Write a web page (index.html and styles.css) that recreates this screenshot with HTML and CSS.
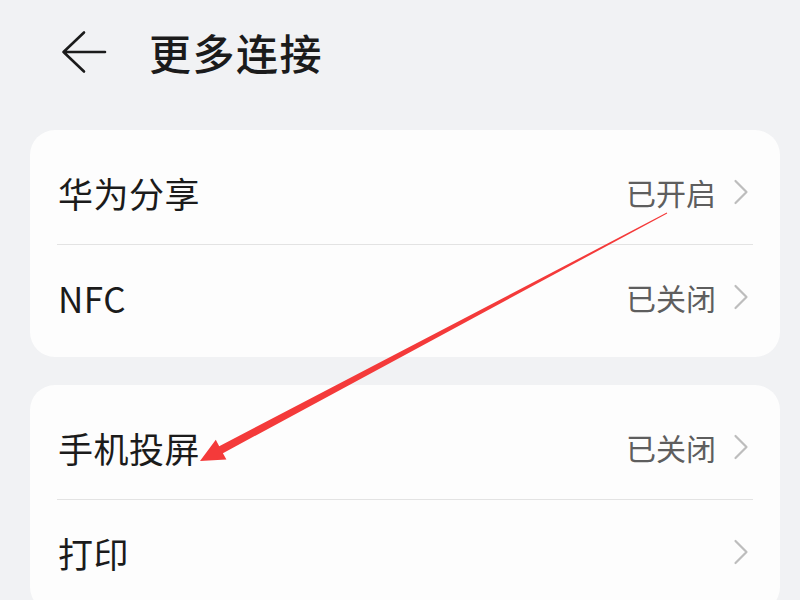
FILE: index.html
```html
<!DOCTYPE html>
<html lang="zh-CN">
<head>
<meta charset="utf-8">
<link rel="stylesheet" href="styles.css">
</head>
<body>
<div class="page">
  <header class="topbar">
    <svg class="back" width="50" height="48" viewBox="58 28 50 48" aria-hidden="true">
      <path d="M63.5 52 H105 M84 32.5 L63.5 52 L84 71.5" fill="none" stroke="#1b1b1b" stroke-width="2.6" stroke-linecap="round" stroke-linejoin="round"/>
    </svg>
    <h1 class="title">更多连接</h1>
  </header>

  <section class="card">
    <div class="row">
      <span class="label">华为分享</span>
      <span class="value">已开启</span>
      <svg class="chev" width="16" height="26" viewBox="0 0 16 26"><path d="M2.5 2 L13.5 13 L2.5 24" fill="none" stroke="#bdbdbd" stroke-width="2.2" stroke-linecap="round" stroke-linejoin="round"/></svg>
    </div>
    <div class="divider"></div>
    <div class="row">
      <span class="label">NFC</span>
      <span class="value">已关闭</span>
      <svg class="chev" width="16" height="26" viewBox="0 0 16 26"><path d="M2.5 2 L13.5 13 L2.5 24" fill="none" stroke="#bdbdbd" stroke-width="2.2" stroke-linecap="round" stroke-linejoin="round"/></svg>
    </div>
  </section>

  <section class="card">
    <div class="row">
      <span class="label">手机投屏</span>
      <span class="value">已关闭</span>
      <svg class="chev" width="16" height="26" viewBox="0 0 16 26"><path d="M2.5 2 L13.5 13 L2.5 24" fill="none" stroke="#bdbdbd" stroke-width="2.2" stroke-linecap="round" stroke-linejoin="round"/></svg>
    </div>
    <div class="divider"></div>
    <div class="row">
      <span class="label">打印</span>
      <span class="value"></span>
      <svg class="chev" width="16" height="26" viewBox="0 0 16 26"><path d="M2.5 2 L13.5 13 L2.5 24" fill="none" stroke="#bdbdbd" stroke-width="2.2" stroke-linecap="round" stroke-linejoin="round"/></svg>
    </div>
  </section>

  <svg class="annot" width="800" height="600" viewBox="0 0 800 600" aria-hidden="true">
    <polygon points="667.2,213.4 222.9,453.2 226.4,459.6 200,461 215.8,439.8 219.2,446.2 666.8,212.6" fill="#f43a3a"/>
  </svg>
</div>
</body>
</html>
```

FILE: styles.css
```css
html, body {
  margin: 0;
  padding: 0;
}
body {
  background: #f1f2f4;
  font-family: "Noto Sans CJK SC", "Noto Sans", sans-serif;
  color: #1b1b1b;
  width: 800px;
  height: 600px;
  overflow: hidden;
}
.page {
  position: relative;
  padding: 0 20px 0 30px;
}
.topbar {
  display: flex;
  align-items: center;
  height: 104px;
  margin-bottom: 26px;
}
.back {
  margin-left: 28px;
  flex: none;
}
.title {
  margin: 0 0 0 41px;
  font-size: 42px;
  font-weight: 500;
  line-height: 1;
  letter-spacing: 1.5px;
}
.card {
  background: #fdfdfd;
  border-radius: 25px;
  padding: 10px 27px 8px;
  margin-bottom: 28px;
}
.row {
  display: flex;
  align-items: center;
  height: 104px;
}
.label {
  flex: 1;
  font-size: 35px;
  font-weight: 400;
  line-height: 1;
  padding-left: 1px;
  letter-spacing: 0.5px;
}
.value {
  font-size: 30px;
  color: #5e5e5e;
  line-height: 1;
  margin-right: 17px;
}
.chev {
  flex: none;
  margin-right: 4px;
}
.divider {
  height: 1px;
  background: #e3e3e3;
}
.annot {
  position: absolute;
  left: 0;
  top: 0;
  pointer-events: none;
}
```
